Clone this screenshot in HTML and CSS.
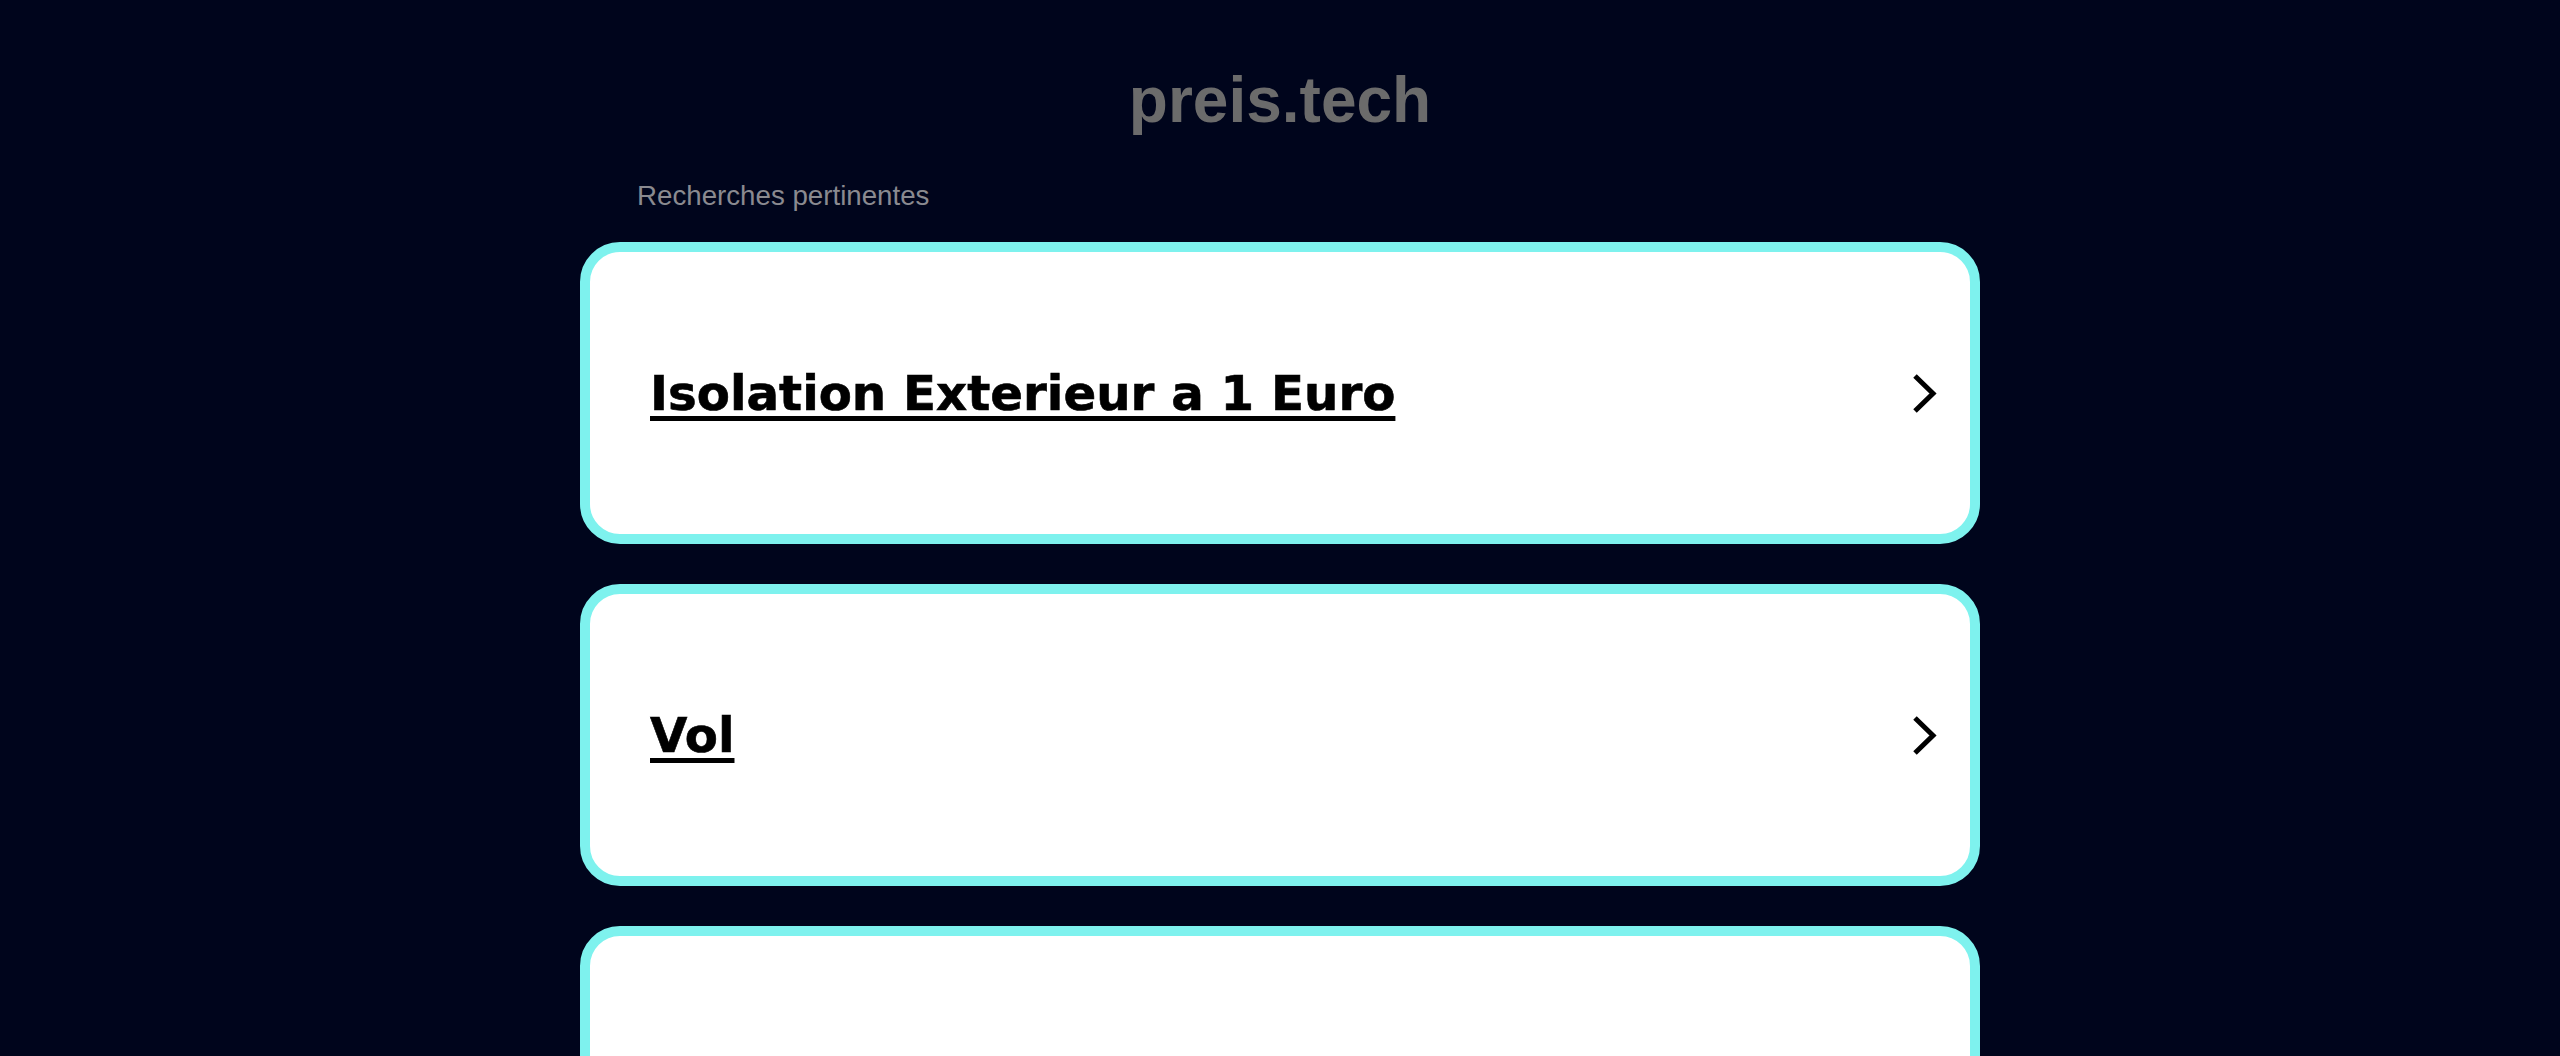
FILE: index.html
```html
<!DOCTYPE html>
<html lang="fr">
<head>
<meta charset="utf-8">
<title>preis.tech</title>
<link rel="stylesheet" href="styles.css">
</head>
<body>
<div class="page">
  <header class="header">
    <h1 class="logo">preis.tech</h1>
  </header>
  <main class="content">
    <p class="label">Recherches pertinentes</p>
    <ul class="list">
      <li class="card">
        <a class="card-link" href="#">Isolation Exterieur a 1 Euro</a>
        <svg class="chev" viewBox="0 0 30 40" width="30" height="40"><path d="M5 3 L23 20.5 L5 38" fill="none" stroke="#000" stroke-width="5"/></svg>
      </li>
      <li class="card">
        <a class="card-link" href="#">Vol</a>
        <svg class="chev" viewBox="0 0 30 40" width="30" height="40"><path d="M5 3 L23 20.5 L5 38" fill="none" stroke="#000" stroke-width="5"/></svg>
      </li>
      <li class="card">
        <a class="card-link" href="#">Assurance</a>
        <svg class="chev" viewBox="0 0 30 40" width="30" height="40"><path d="M5 3 L23 20.5 L5 38" fill="none" stroke="#000" stroke-width="5"/></svg>
      </li>
    </ul>
  </main>
</div>
</body>
</html>
```
FILE: styles.css
```css
html, body {
  margin: 0;
  padding: 0;
  background: #00051c;
  height: 100%;
  overflow: hidden;
}
.page {
  width: 1400px;
  margin: 0 auto;
  font-family: "Liberation Sans", Arial, sans-serif;
}
.header {
  padding-top: 68px;
  text-align: center;
}
.logo {
  margin: 0;
  font-size: 64px;
  line-height: 64px;
  font-weight: bold;
  color: #6b6b6b;
}
.content {
  padding-top: 50px;
}
.label {
  margin: 0 0 32px 57px;
  font-size: 27.7px;
  line-height: 28px;
  color: #8a8a90;
}
.list {
  list-style: none;
  margin: 0;
  padding: 0;
  display: flex;
  flex-direction: column;
  gap: 40px;
}
.card {
  box-sizing: border-box;
  height: 302px;
  background: #fff;
  border: 10px solid #7ef2ee;
  border-radius: 40px;
  display: flex;
  align-items: center;
  justify-content: space-between;
  padding: 0 30px 0 60px;
}
.card-link {
  font-family: "DejaVu Sans", Verdana, sans-serif;
  font-weight: bold;
  font-size: 48.3px;
  color: #000;
  text-decoration: underline;
  text-decoration-thickness: 5px;
  text-underline-offset: 6px;
  -webkit-text-stroke: 0.6px #000;
}
.chev {
  display: block;
  flex: none;
}
```
